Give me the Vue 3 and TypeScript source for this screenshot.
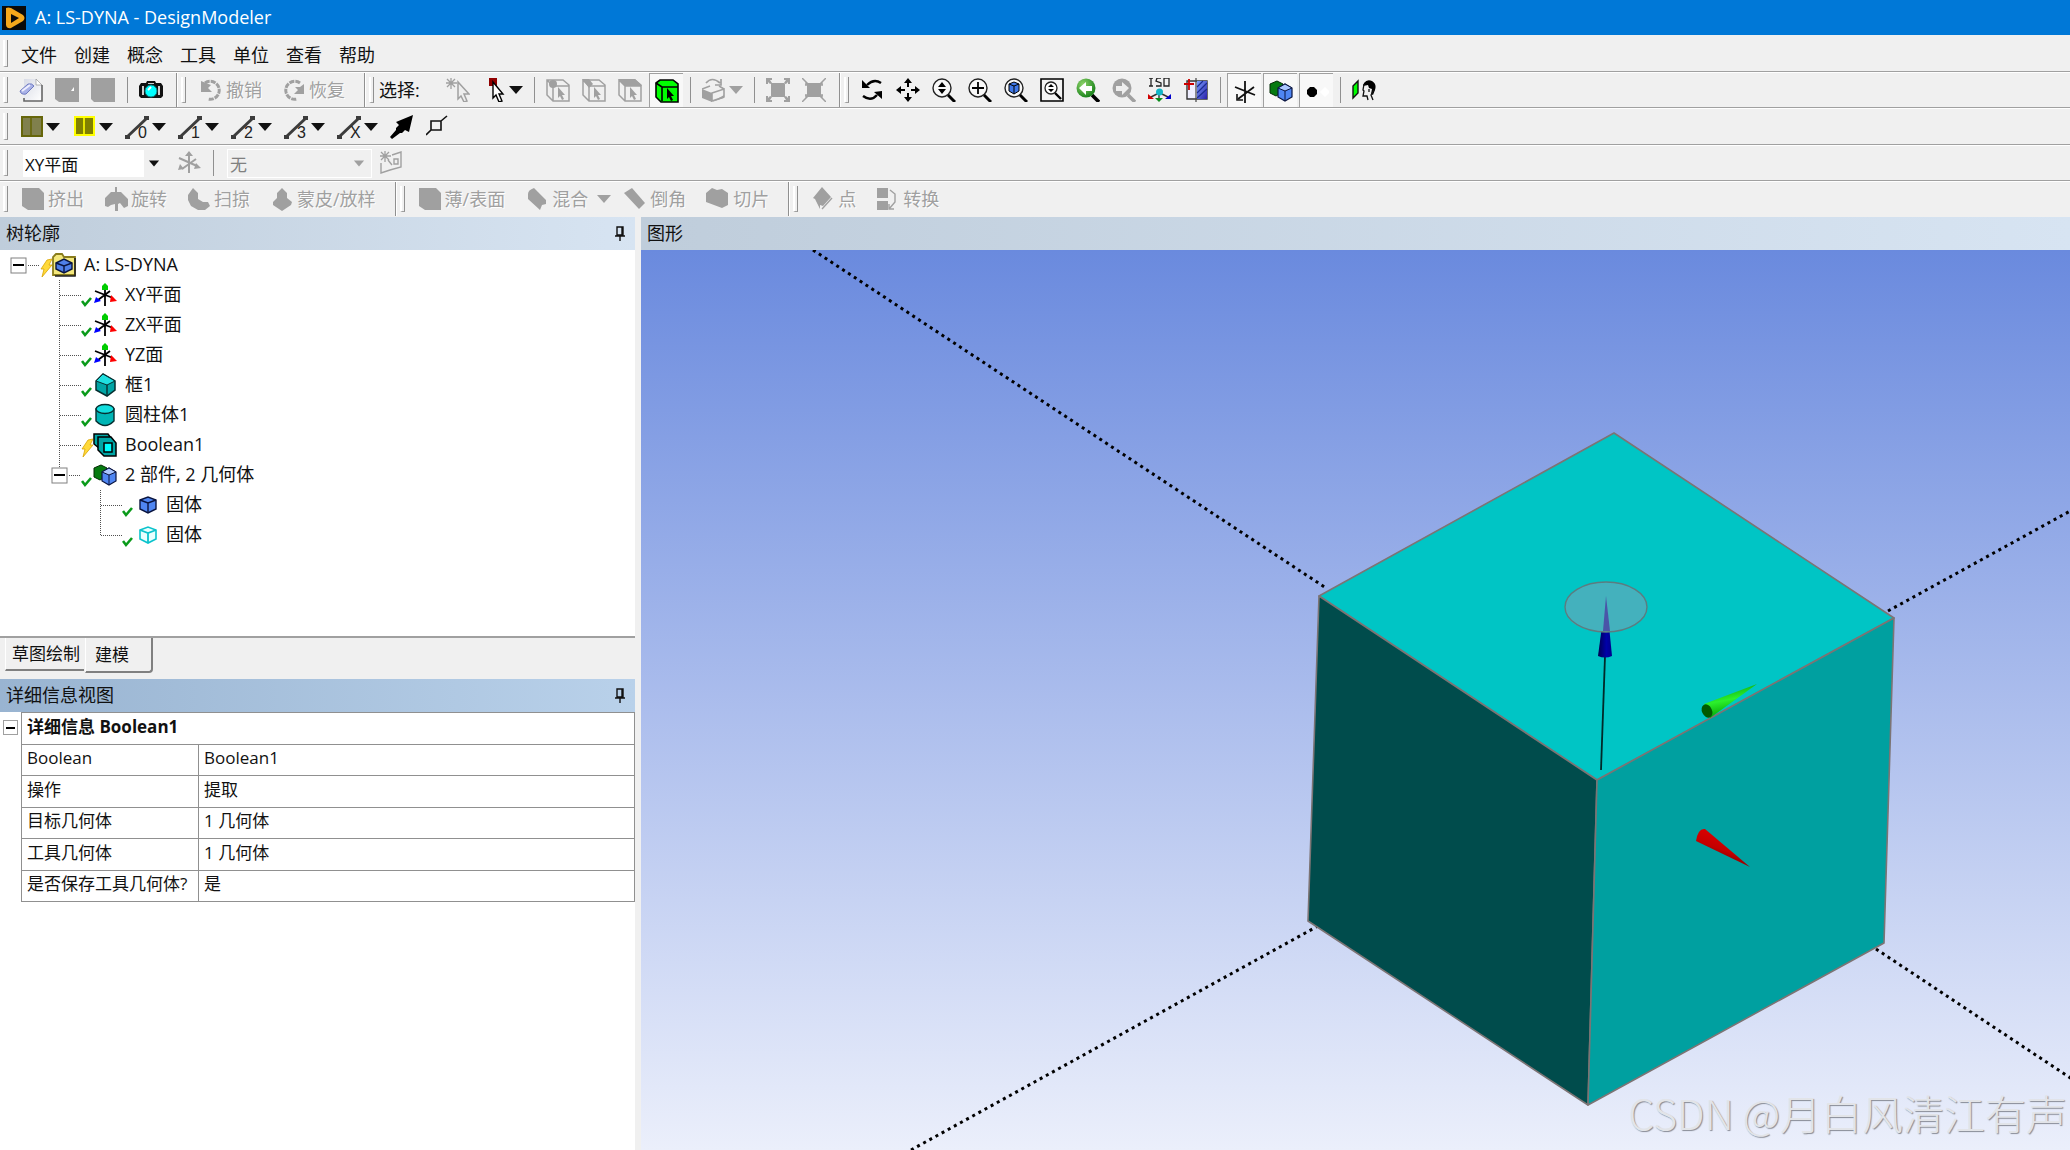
<script setup lang="ts">
import { ref } from 'vue'

type Kind = 'grip' | 'sep' | 'end' | 'btn' | 'drop' | 'text' | 'caret' | 'label'
interface Tool {
  kind: Kind
  icon?: string
  text?: string
  title?: string
  off?: boolean
  on?: boolean
}
interface TreeNode {
  text: string
  icon: string
  status: 'ok' | 'bolt'
  level: 0 | 1 | 2
  open?: boolean
  last?: boolean
}

const menus = ['文件', '创建', '概念', '工具', '单位', '查看', '帮助']

const mainTools: Tool[] = [
  { kind: 'grip' },
  { kind: 'btn', icon: 'new', title: '新建' },
  { kind: 'btn', icon: 'save', title: '保存', off: true },
  { kind: 'btn', icon: 'block', title: '导出', off: true },
  { kind: 'sep' },
  { kind: 'btn', icon: 'camera', title: '截图' },
  { kind: 'end' },
  { kind: 'grip' },
  { kind: 'text', icon: 'undo', text: '撤销', off: true },
  { kind: 'text', icon: 'redo', text: '恢复', off: true },
  { kind: 'end' },
  { kind: 'grip' },
  { kind: 'label', text: '选择:' },
  { kind: 'btn', icon: 'newsel', title: '新建选择', off: true },
  { kind: 'drop', icon: 'pointer', title: '选择模式' },
  { kind: 'sep' },
  { kind: 'btn', icon: 'selpoint', title: '点', off: true },
  { kind: 'btn', icon: 'seledge', title: '边', off: true },
  { kind: 'btn', icon: 'selface', title: '面', off: true },
  { kind: 'btn', icon: 'selbody', title: '体', on: true },
  { kind: 'sep' },
  { kind: 'drop', icon: 'extend', title: '扩展选择', off: true },
  { kind: 'sep' },
  { kind: 'btn', icon: 'expand', title: '放大', off: true },
  { kind: 'btn', icon: 'shrink', title: '缩小', off: true },
  { kind: 'end' },
  { kind: 'grip' },
  { kind: 'btn', icon: 'rotate', title: '旋转' },
  { kind: 'btn', icon: 'pan', title: '平移' },
  { kind: 'btn', icon: 'zoom', title: '缩放' },
  { kind: 'btn', icon: 'zoombox', title: '框选缩放' },
  { kind: 'btn', icon: 'zoomfit', title: '适合窗口' },
  { kind: 'btn', icon: 'magnify', title: '放大镜' },
  { kind: 'btn', icon: 'prev', title: '上一视图' },
  { kind: 'btn', icon: 'next', title: '下一视图', off: true },
  { kind: 'btn', icon: 'iso', title: '等轴测' },
  { kind: 'btn', icon: 'section', title: '截面' },
  { kind: 'sep' },
  { kind: 'btn', icon: 'axes', title: '显示平面', on: true },
  { kind: 'btn', icon: 'cubes', title: '显示模型', on: true },
  { kind: 'btn', icon: 'dots', title: '显示点', on: true },
  { kind: 'sep' },
  { kind: 'btn', icon: 'look', title: '正视于' },
]

const lineTools: Tool[] = [
  { kind: 'grip' },
  { kind: 'drop', icon: 'face', title: '面颜色' },
  { kind: 'drop', icon: 'facey', title: '边颜色' },
  { kind: 'drop', icon: 'edge', text: '0', title: '边 0' },
  { kind: 'drop', icon: 'edge', text: '1', title: '边 1' },
  { kind: 'drop', icon: 'edge', text: '2', title: '边 2' },
  { kind: 'drop', icon: 'edge', text: '3', title: '边 3' },
  { kind: 'drop', icon: 'edge', text: 'X', title: '边 X' },
  { kind: 'btn', icon: 'arrow', title: '方向' },
  { kind: 'btn', icon: 'vertex', title: '顶点' },
]

const featureTools: Tool[] = [
  { kind: 'grip' },
  { kind: 'text', icon: 'extrude', text: '挤出', off: true },
  { kind: 'text', icon: 'revolve', text: '旋转', off: true },
  { kind: 'text', icon: 'sweep', text: '扫掠', off: true },
  { kind: 'text', icon: 'skin', text: '蒙皮/放样', off: true },
  { kind: 'end' },
  { kind: 'grip' },
  { kind: 'text', icon: 'extrude', text: '薄/表面', off: true },
  { kind: 'text', icon: 'blend', text: '混合', off: true },
  { kind: 'caret', title: '混合选项', off: true },
  { kind: 'text', icon: 'chamfer', text: '倒角', off: true },
  { kind: 'text', icon: 'slice', text: '切片', off: true },
  { kind: 'end' },
  { kind: 'grip' },
  { kind: 'text', icon: 'point', text: '点', off: true },
  { kind: 'text', icon: 'convert', text: '转换', off: true },
]

const toolRows: { name: string; items: Tool[] }[] = [
  { name: 'main', items: mainTools },
  { name: 'lines', items: lineTools },
]

const tree: TreeNode[] = [
  { text: 'A: LS-DYNA', icon: 'project', status: 'bolt', level: 0, open: true },
  { text: 'XY平面', icon: 'plane', status: 'ok', level: 1 },
  { text: 'ZX平面', icon: 'plane', status: 'ok', level: 1 },
  { text: 'YZ面', icon: 'plane', status: 'ok', level: 1 },
  { text: '框1', icon: 'box', status: 'ok', level: 1 },
  { text: '圆柱体1', icon: 'cyl', status: 'ok', level: 1 },
  { text: 'Boolean1', icon: 'bool', status: 'bolt', level: 1 },
  { text: '2 部件, 2 几何体', icon: 'cubes', status: 'ok', level: 1, open: true },
  { text: '固体', icon: 'solid', status: 'ok', level: 2 },
  { text: '固体', icon: 'solidc', status: 'ok', level: 2, last: true },
]

const details = [
  ['Boolean', 'Boolean1'],
  ['操作', '提取'],
  ['目标几何体', '1 几何体'],
  ['工具几何体', '1 几何体'],
  ['是否保存工具几何体?', '是'],
]

const plane = ref('XY平面')
const sketch = ref('无')
</script>

<template>
  <div class="app">
    <svg class="defs" aria-hidden="true">
      <defs>
        <linearGradient id="g-hatch" x1="0" y1="0" x2="1" y2="1">
          <stop offset="0" stop-color="#7aa0ff" /><stop offset="1" stop-color="#2a1ea8" />
        </linearGradient>
        <linearGradient id="g-page" x1="0" y1="0" x2="1" y2="1">
          <stop offset="0" stop-color="#d8dbe6" /><stop offset="1" stop-color="#ffffff" />
        </linearGradient>
        <radialGradient id="g-green" cx=".35" cy=".3" r=".8">
          <stop offset="0" stop-color="#8fd46a" /><stop offset="1" stop-color="#0c7a12" />
        </radialGradient>
      </defs>
      <symbol id="i-new" viewBox="0 0 24 24"><path d="M5 1h12l6 6v16H5z" fill="url(#g-page)" /><path d="M17 1v6h6z" fill="#fff" stroke="#888" stroke-width=".6" /><path d="M23 7v16H5v-3" fill="none" stroke="#666" stroke-width="1.6" /><path d="M1 13l8-7q4-1 6 2l-8 8q-5 1-6-3z" fill="#a9b2e8" stroke="#6f7ac0" /><path d="M3 13l8-6" stroke="#eef" stroke-width="2" /></symbol>
      <symbol id="i-save" viewBox="0 0 24 24"><path d="M0 0h24v24H4l-4-3z" fill="#a0a0a0" /><path d="M19 9v4h-3z" fill="#fff" /></symbol>
      <symbol id="i-block" viewBox="0 0 24 24"><path d="M0 0h24v24H3l-3-3z" fill="#a0a0a0" /></symbol>
      <symbol id="i-camera" viewBox="0 0 24 24"><path d="M0 8l2-3h5l1-2h8l1 2h5l2 3v10l-2 2H2l-2-2z" fill="#111" /><path d="M3 8h2v9H3zM19 8h2v9h-2zM9 5h6v1H9z" fill="#ccc" /><circle cx="12" cy="13" r="6" fill="#0ff" stroke="#0a7f80" stroke-width="1" /><path d="M9 12l3-3" stroke="#fff" stroke-width="2" /></symbol>
      <symbol id="i-undo" viewBox="0 0 24 24"><path d="M6 5a9 9 0 1 1 3 16" fill="none" stroke="#a0a0a0" stroke-width="3" stroke-dasharray="5 1" /><path d="M2 3v11h11l-4-4 3-3-5-2z" fill="#a0a0a0" /></symbol>
      <symbol id="i-redo" viewBox="0 0 24 24"><path d="M18 5a9 9 0 1 0-3 16" fill="none" stroke="#a0a0a0" stroke-width="3" stroke-dasharray="5 1" /><path d="M22 6v10H12l4-4-3-3h5z" fill="#a0a0a0" /></symbol>
      <symbol id="i-newsel" viewBox="0 0 24 24"><path d="M5 0v11M0 5h11M1 1l8 8M9 1L1 9" stroke="#a0a0a0" stroke-width="1.3" /><path d="M12 4v17l3-3 3 6 3-1-3-7h5z" fill="#eee" stroke="#a0a0a0" stroke-width="1.5" /></symbol>
      <symbol id="i-pointer" viewBox="0 0 24 24"><path d="M7 0h8v8H7z" fill="#900000" /><path d="M11 4v16l3-3 3 7 3-1-3-7h4z" fill="#fff" stroke="#000" stroke-width="1.4" /></symbol>
      <symbol id="i-selbase" viewBox="0 0 24 24"><path d="M1 2h16l6 5v16H7l-6-6zM7 8h16M7 8v15M1 2l6 6" fill="none" stroke="#a0a0a0" stroke-width="1.5" /><path d="M12 9v11l2-2 2 4 2-1-2-4h3z" fill="#a0a0a0" /></symbol>
      <symbol id="i-selpoint" viewBox="0 0 24 24"><use href="#i-selbase" /><circle cx="7" cy="6" r="4" fill="#a0a0a0" /></symbol>
      <symbol id="i-seledge" viewBox="0 0 24 24"><use href="#i-selbase" /><path d="M0 1h7l4 5-4 4z" fill="#a0a0a0" /></symbol>
      <symbol id="i-selface" viewBox="0 0 24 24"><use href="#i-selbase" /><path d="M0 1h17l7 7H7z" fill="#a0a0a0" /></symbol>
      <symbol id="i-selbody" viewBox="0 0 24 24"><path d="M1 4l4-3h13l5 4v18H6l-5-5z" fill="#0f0" stroke="#000" stroke-width="1.6" /><path d="M1 4l6 4v14M7 8h16" fill="none" stroke="#000" stroke-width="1.6" /><path d="M12 9v11l2-2 2 4 2-1-2-4h3z" fill="#000" /></symbol>
      <symbol id="i-extend" viewBox="0 0 24 24"><path d="M0 11l10 4v9L0 20z" fill="#a0a0a0" /><path d="M10 15l12-4v8l-12 4zM0 11l8-3M22 11l-5-3" fill="none" stroke="#a0a0a0" stroke-width="1.6" /><path d="M10 24l12-7v3z" fill="#a0a0a0" /><path d="M4 5q6-7 14 0M13 7h6V1" fill="none" stroke="#a0a0a0" stroke-width="1.7" /></symbol>
      <symbol id="i-expand" viewBox="0 0 24 24"><path d="M5 5h14v14H5zM0 0h6v2H4l2 3-2 1-2-2v2H0zM24 0h-6v2h2l-2 3 2 1 2-2v2h2zM0 24h6v-2H4l2-3-2-1-2 2v-2H0zM24 24h-6v-2h2l-2-3 2-1 2 2v-2h2z" fill="#a0a0a0" /></symbol>
      <symbol id="i-shrink" viewBox="0 0 24 24"><path d="M5 5h14v14H5z" fill="#a0a0a0" /><path d="M0 0l6 6M24 0l-6 6M0 24l6-6M24 24l-6-6M4 4v3M20 4v3M4 17v3M20 17v3M3 7h4M21 7h-4M3 17h4M21 17h-4" stroke="#a0a0a0" stroke-width="1.5" /></symbol>
      <symbol id="i-rotate" viewBox="0 0 24 24"><path d="M21 5q-7-5-14 2M3 18q8 6 14-1" fill="none" stroke="#000" stroke-width="2.4" /><path d="M2 2v8h8zM22 13v8l-8-7z" fill="#000" /></symbol>
      <symbol id="i-pan" viewBox="0 0 24 24"><path d="M12 3v6M12 15v6M3 12h6M15 12h6" stroke="#000" stroke-width="2" /><path d="M12 0l4 5H8zM12 24l4-5H8zM0 12l5-4v8zM24 12l-5-4v8z" fill="#000" /></symbol>
      <symbol id="i-lens" viewBox="0 0 24 24"><circle cx="10" cy="10" r="9" fill="#f8f8f8" stroke="#222" stroke-width="1.4" /><path d="M16 17l7 7" stroke="#000" stroke-width="3" /></symbol>
      <symbol id="i-zoom" viewBox="0 0 24 24"><use href="#i-lens" /><path d="M10 4l4 5H6zM10 16l4-5H6z" fill="#000" /></symbol>
      <symbol id="i-zoombox" viewBox="0 0 24 24"><use href="#i-lens" /><path d="M10 4v12M4 10h12" stroke="#000" stroke-width="1.8" /></symbol>
      <symbol id="i-zoomfit" viewBox="0 0 24 24"><use href="#i-lens" /><path d="M5 6l5-2 5 2v7l-5 3-5-3z" fill="#3f78e8" stroke="#000" /><path d="M5 6l5 2 5-2M10 8v8" stroke="#000" fill="none" /></symbol>
      <symbol id="i-magnify" viewBox="0 0 24 24"><path d="M1 1h22v22H1z" fill="#f4f4f4" stroke="#000" stroke-width="1.6" /><circle cx="11" cy="10" r="6" fill="#fff" stroke="#222" stroke-width="1.3" /><path d="M15 15l6 6" stroke="#000" stroke-width="2.4" /><path d="M11 6l3 3H8zM11 14l3-3H8z" fill="#000" /></symbol>
      <symbol id="i-prev" viewBox="0 0 24 24"><path d="M16 17l7 7" stroke="#000" stroke-width="3.6" /><circle cx="10" cy="10" r="9.5" fill="url(#g-green)" /><path d="M3 10l7-6v4h6v5h-6v4z" fill="#fff" /></symbol>
      <symbol id="i-next" viewBox="0 0 24 24"><path d="M16 17l7 7" stroke="#a0a0a0" stroke-width="3.6" /><circle cx="10" cy="10" r="9.5" fill="#a0a0a0" /><path d="M17 10l-7-6v4H4v5h6v4z" fill="#eee" /></symbol>
      <symbol id="i-iso" viewBox="0 0 24 24"><path d="M1 0h4M3 0v8M1 8h4M13 0H9L8 3l5 2v3H8M16 0h5v8h-5z" fill="none" stroke="#222" stroke-width="1.3" /><path d="M11 16v6M9 16l-6 3M14 16l6 3" stroke="#333" stroke-width="1.4" /><path d="M0 16v5h6z" fill="#d00000" /><path d="M23 16v5h-6z" fill="#00c" /><path d="M7 20h8l-4 4z" fill="#0a8a1a" /><circle cx="11.500" cy="14" r="3.500" fill="#12b6c8" /></symbol>
      <symbol id="i-section" viewBox="0 0 24 24"><path d="M3 3h20v18H3z" fill="#eef" stroke="#333" stroke-width="1.4" /><path d="M13 3h10v18H13z" fill="url(#g-hatch)" /><path d="M13 9l6-6M13 15L23 5M13 20l10-9" stroke="#1b2a90" stroke-width="1.2" /><path d="M12 0v24" stroke="#444" stroke-width="1.2" /><path d="M5 1v11M0 6h10" stroke="#c00" stroke-width="1.8" /></symbol>
      <symbol id="i-axes" viewBox="0 0 24 24"><path d="M12 2v22M2 8l20 8M21 8L5 20" stroke="#111" stroke-width="1.8" /><path d="M4 15v6h6" stroke="#111" stroke-width="1.6" fill="none" /></symbol>
      <symbol id="i-cubes" viewBox="0 0 24 24"><path d="M1 5l7-3 6 3v8l-7 4-6-3z" fill="#067a10" stroke="#022c05" /><path d="M9 9l7-4 7 4v9l-7 4-7-4z" fill="#4f86f2" stroke="#0a1540" stroke-width="1.2" /><path d="M9 9l7-4 7 4-7 3z" fill="#a9c6ff" stroke="#0a1540" /><path d="M16 12v10" stroke="#0a1540" /></symbol>
      <symbol id="i-dots" viewBox="0 0 24 24"><path d="M5 8h4l3 3v4l-3 3H5l-3-3v-4z" fill="#000" /><path d="M20 8l5 5-5 5-5-5z" fill="#fff" /></symbol>
      <symbol id="i-look" viewBox="0 0 24 24"><path d="M1 8l5-5v12l-5 5z" fill="#0f0" stroke="#111" stroke-width="1.4" /><path d="M12 5q3-4 8-2 5 3 3 9l-2 5-2-1 1-5-3-1-1-3-5 1z" fill="#000" /><path d="M12 6l-1 6 1 1-1 5h4l1 4M22 12l-3 5 2 5M17 11v3" fill="none" stroke="#111" stroke-width="1.3" /></symbol>
      <symbol id="i-face" viewBox="0 0 24 24"><path d="M3 2h20v19H3z" fill="#80804d" stroke="#66660a" stroke-width="2" /><path d="M12 2v19" stroke="#66660a" stroke-width="1.6" /></symbol>
      <symbol id="i-facey" viewBox="0 0 24 24"><path d="M3 2h19v18H3z" fill="#808000" stroke="#ff0" stroke-width="2" /><path d="M12 2v18" stroke="#ff0" stroke-width="1.6" /></symbol>
      <symbol id="i-edge" viewBox="0 0 24 24"><path d="M2 22L22 3" stroke="#3c3c3c" stroke-width="3" /><path d="M0 20h5v4H0zM19 1h5v4h-5z" fill="#3c3c3c" /></symbol>
      <symbol id="i-arrow" viewBox="0 0 24 24"><path d="M23 0l-4 17-4-2-3 3h-2l-8 6-2-2 6-7v-2l3-3-3-3z" fill="#000" /></symbol>
      <symbol id="i-vertex" viewBox="0 0 24 24"><path d="M5 6h10v9H5zM0 20l5-5M15 6l6-5" fill="none" stroke="#111" stroke-width="1.6" /></symbol>
      <symbol id="i-axesoff" viewBox="0 0 24 24"><path d="M12 3v19M2 7l18 8M19 8L5 18" stroke="#a0a0a0" stroke-width="2" /><path d="M12 0l4 5H8zM24 17l-7 1 2-6zM1 19l2-6 4 5z" fill="#a0a0a0" /></symbol>
      <symbol id="i-newsk" viewBox="0 0 24 24"><path d="M6 0v11M1 5h11M2 1l8 8M10 1L2 9" stroke="#a0a0a0" stroke-width="1.3" /><path d="M2 12v10l9-3 11-3V1l-9 3" fill="none" stroke="#a0a0a0" stroke-width="1.4" /><path d="M9 9l4 5M15 8h4v5h-4z" fill="none" stroke="#a0a0a0" stroke-width="1.4" /></symbol>
      <symbol id="i-extrude" viewBox="0 0 24 24"><path d="M1 1h17l5 5v17H7l-6-4z" fill="#a0a0a0" /></symbol>
      <symbol id="i-revolve" viewBox="0 0 24 24"><path d="M1 19V11l6-6h4V0h2v5h4l7 7v7l-4 2-4-5-2 1v7h-3v-7l-4 1-3 2z" fill="#a0a0a0" /></symbol>
      <symbol id="i-sweep" viewBox="0 0 24 24"><path d="M1 8l5-7 5 5v6l5 3h5l2 4-5 4h-7l-7-4-3-6z" fill="#a0a0a0" /></symbol>
      <symbol id="i-skin" viewBox="0 0 24 24"><path d="M12 1l5 5v5l5 4-1 3-9 6-9-6v-3l4-4V6z" fill="#a0a0a0" /></symbol>
      <symbol id="i-blend" viewBox="0 0 24 24"><path d="M3 7q0-4 6-6l12 12v4l-4 1-2 5L3 12z" fill="#a0a0a0" /></symbol>
      <symbol id="i-chamfer" viewBox="0 0 24 24"><path d="M1 6l8-5 13 15-6 6z" fill="#a0a0a0" /></symbol>
      <symbol id="i-slice" viewBox="0 0 24 24"><path d="M0 6l6-5 5 2 5-1 6 4v12l-6 3L0 15z" fill="#a0a0a0" /></symbol>
      <symbol id="i-point" viewBox="0 0 24 24"><path d="M11 0l9 10-8 9-3-1v4L4 12l-2-1z" fill="#a0a0a0" /><path d="M11 22l10-11" stroke="#a0a0a0" stroke-width="1.4" /></symbol>
      <symbol id="i-convert" viewBox="0 0 24 24"><path d="M1 1h11v10H1zM1 14h11v9H1z" fill="#a0a0a0" /><path d="M14 3l5 4v8l-6 7M13 17v5h5" fill="none" stroke="#a0a0a0" stroke-width="1.4" /></symbol>
      <symbol id="i-project" viewBox="0 0 24 24"><path d="M1 22V4l3-3h6l2 3h11v18z" fill="#f4e87c" stroke="#8a7d1c" stroke-width="1.8" /><path d="M23 5v18H3" stroke="#222" stroke-width="1.6" fill="none" /><path d="M4 10l8-4 8 4v6l-8 4-8-4z" fill="#4f7fe8" stroke="#0a1540" stroke-width="1.4" /><path d="M4 10l8 3 8-3M12 13v7" fill="none" stroke="#0a1540" stroke-width="1.4" /></symbol>
      <symbol id="i-plane" viewBox="0 0 24 24"><path d="M12 4v19M2 8l18 7M17 8L5 17" stroke="#000" stroke-width="1.8" /><path d="M12 0l3 3v4H9V3z" fill="#0c0" /><path d="M18 12l6 6-7 1z" fill="#f00" /><path d="M1 20l2-6 5 4z" fill="#00f" /></symbol>
      <symbol id="i-box" viewBox="0 0 24 24"><path d="M3 8l7-7 12 7v9l-8 6-11-6z" fill="#00a5a5" stroke="#062f30" stroke-width="1.5" /><path d="M3 8l7-7 12 7-8 4z" fill="#1fe0e0" stroke="#062f30" /><path d="M14 12v11" stroke="#062f30" stroke-width="1.4" /></symbol>
      <symbol id="i-cyl" viewBox="0 0 24 24"><path d="M3 6v12q9 9 18 0V6z" fill="#00b5b5" stroke="#062f30" stroke-width="1.4" /><ellipse cx="12" cy="6" rx="9" ry="4.500" fill="#12dede" stroke="#062f30" stroke-width="1.4" /></symbol>
      <symbol id="i-bool" viewBox="0 0 24 24"><path d="M1 1h14l3 4v10H6l-5-4z" fill="#00a5a5" stroke="#000" stroke-width="1.5" /><path d="M5 4h13l5 6v13H11l-6-6z" fill="#00a5a5" stroke="#000" stroke-width="1.5" /><path d="M11 10h8v9h-8z" fill="#0ff" stroke="#000" stroke-width="1.5" /></symbol>
      <symbol id="i-solid" viewBox="0 0 24 24"><path d="M6 7l8-3 8 3v9l-8 4-8-4z" fill="#4f86f2" stroke="#0a1540" stroke-width="1.4" /><path d="M6 7l8 3 8-3M14 10v10" fill="none" stroke="#0a1540" stroke-width="1.4" /></symbol>
      <symbol id="i-solidc" viewBox="0 0 24 24"><path d="M6 7l8-3 8 3v9l-8 4-8-4z" fill="#e8ffff" stroke="#0bc3cc" stroke-width="1.6" /><path d="M6 7l8 3 8-3M14 10v10" fill="none" stroke="#0bc3cc" stroke-width="1.8" /></symbol>
    </svg>

    <header class="title">
      <svg class="ico" viewBox="0 0 24 24"><path d="M0 0h24v24H0z" fill="#0a0a0a" /><path d="M4 2q2-1 5 0l12 7q3 3 0 6L9 22q-4 1-5-3z" fill="#f5a81c" /><path d="M9 8l8 4-8 5z" fill="#0a0a0a" /></svg>
      <h1>A: LS-DYNA - DesignModeler</h1>
    </header>

    <nav class="bar menu">
      <span class="grip"></span>
      <button v-for="m in menus" :key="m" type="button">{{ m }}</button>
    </nav>

    <template v-for="row in toolRows" :key="row.name">
      <div class="bar" :class="row.name">
        <template v-for="(t, i) in row.items" :key="i">
          <span v-if="t.kind === 'grip' || t.kind === 'sep' || t.kind === 'end'" :class="t.kind"></span>
          <span v-else-if="t.kind === 'label'" class="lbl">{{ t.text }}</span>
          <button v-else type="button" class="tool" :class="[t.kind, { on: t.on }]" :disabled="t.off" :aria-label="t.title">
            <svg v-if="t.icon" class="ico">
              <use :href="'#i-' + t.icon" />
              <text v-if="t.kind === 'drop' && t.text" x="13" y="23" class="num">{{ t.text }}</text>
            </svg>
            <span v-if="t.kind === 'text'">{{ t.text }}</span>
            <svg v-if="t.kind === 'drop'" class="car" viewBox="0 0 14 8"><path d="M0 0h14L7 8z" /></svg>
          </button>
        </template>
      </div>
    </template>

    <div class="bar planes">
      <span class="grip"></span>
      <label class="combo">
        <select v-model="plane" aria-label="平面">
          <option>XY平面</option><option>ZX平面</option><option>YZ面</option>
        </select>
        <span class="drp"><svg class="car" viewBox="0 0 14 8"><path d="M1 0h12L7 7z" /></svg></span>
      </label>
      <button type="button" class="tool btn" disabled aria-label="新平面"><svg class="ico"><use href="#i-axesoff" /></svg></button>
      <span class="sep"></span>
      <label class="combo off">
        <select v-model="sketch" disabled aria-label="草图"><option>无</option></select>
        <span class="drp"><svg class="car" viewBox="0 0 14 8"><path d="M1 0h12L7 7z" /></svg></span>
      </label>
      <button type="button" class="tool btn" disabled aria-label="新草图"><svg class="ico"><use href="#i-newsk" /></svg></button>
    </div>

    <div class="bar features">
      <template v-for="(t, i) in featureTools" :key="i">
        <span v-if="t.kind === 'grip' || t.kind === 'end'" :class="t.kind"></span>
        <button v-else type="button" class="tool" :class="t.kind" :disabled="t.off" :aria-label="t.title">
          <svg v-if="t.icon" class="ico"><use :href="'#i-' + t.icon" /></svg>
          <span v-if="t.text">{{ t.text }}</span>
          <svg v-if="t.kind === 'caret'" class="car" viewBox="0 0 14 8"><path d="M0 0h14L7 8z" /></svg>
        </button>
      </template>
    </div>

    <main class="work">
      <aside class="side">
        <h2 class="head"><span>树轮廓</span>
          <svg class="pin" viewBox="0 0 12 16"><path d="M3 1h6v8H3zM1 10h10M6 10v5M8 1v8" fill="none" stroke="#111" stroke-width="1.4" /></svg>
        </h2>
        <ul class="tree">
          <li v-for="(n, i) in tree" :key="i" :class="['lv' + n.level, { open: n.open }]">
            <button v-if="n.open" type="button" class="exp" aria-label="折叠">
              <svg width="17" height="30"><path v-if="n.level" d="M8.500 0v7" class="dot" /><rect x="1" y="8" width="15" height="15" fill="#fff" stroke="#808080" /><path d="M3 15h11" stroke="#000" stroke-width="2" /></svg>
            </button>
            <svg v-if="n.open" width="13" height="30"><path d="M1 15.500h11" class="dot" /></svg>
            <svg v-else width="22" height="30"><path :d="n.last ? 'M.5 0v15' : 'M.5 0v30'" class="dot" /><path d="M1 15.500h21" class="dot" /></svg>
            <svg width="12" height="30">
              <path v-if="n.status === 'ok'" d="M1 21l3 4 6-7" fill="none" stroke="#0a9a1a" stroke-width="2.600" />
              <path v-else d="M7 10l5-1-3 6h3L2 27l2-8H1z" fill="#ffd93a" stroke="#d9a400" stroke-width=".8" />
            </svg>
            <svg class="ico"><use :href="'#i-' + n.icon" /></svg>
            <span class="name">{{ n.text }}</span>
          </li>
        </ul>
        <div class="tabs">
          <button type="button">草图绘制</button>
          <button type="button" class="cur">建模</button>
        </div>
        <h2 class="head act"><span>详细信息视图</span>
          <svg class="pin" viewBox="0 0 12 16"><path d="M3 1h6v8H3zM1 10h10M6 10v5M8 1v8" fill="none" stroke="#111" stroke-width="1.4" /></svg>
        </h2>
        <div class="info">
          <div class="gut"><button type="button" aria-label="折叠"></button></div>
          <table>
            <thead><tr><th colspan="2">详细信息 Boolean1</th></tr></thead>
            <tbody>
              <tr v-for="d in details" :key="d[0]"><td class="key">{{ d[0] }}</td><td>{{ d[1] }}</td></tr>
            </tbody>
          </table>
        </div>
      </aside>

      <section class="view">
        <h2 class="head"><span>图形</span></h2>
        <div class="canvas">
          <svg class="scene" viewBox="641 250 1429 900" preserveAspectRatio="xMidYMid slice">
            <defs>
              <linearGradient id="c-blue"><stop offset="0" stop-color="#000050" /><stop offset=".6" stop-color="#0000a8" /><stop offset="1" stop-color="#00008a" /></linearGradient>
              <linearGradient id="c-green" x1="0" y1="0" x2=".3" y2="1"><stop offset="0" stop-color="#008800" /><stop offset=".55" stop-color="#2cf02c" /><stop offset="1" stop-color="#00a000" /></linearGradient>
              <linearGradient id="c-red" x1=".4" y1="0" x2="0" y2=".8"><stop offset="0" stop-color="#e00000" /><stop offset=".5" stop-color="#c40000" /><stop offset="1" stop-color="#500000" /></linearGradient>
            </defs>
            <path d="M813 250L1326 588M1888 611L2072 510M911 1150L1318 926M1876 949L2072 1079" class="axis" />
            <g stroke="#7c7474" stroke-width="1.600" stroke-linejoin="round">
              <path d="M1614 433l280 185-297 162-278-184z" fill="#00c5c5" />
              <path d="M1319 596l278 184-9 325-280-184z" fill="#004c4c" />
              <path d="M1597 780l297-162-10 325-296 162z" fill="#00a0a0" />
            </g>
            <path d="M1605 656l-4 114" stroke="#002a2a" stroke-width="1.800" />
            <path d="M1606 596l6 60q-7 3-14 0z" fill="url(#c-blue)" />
            <path d="M1565 607a41 25 0 0 1 82 0a41 25 0 0 1-39 25h-4q-39-3-39-25z" fill="#44b1bd" />
            <path d="M1606 596l4 35h-7z" fill="#4a55a8" />
            <ellipse cx="1606" cy="607" rx="41" ry="25" fill="none" stroke="#5c7c80" stroke-width="1.400" />
            <path d="M1757 684l-53 20 6 14z" fill="url(#c-green)" />
            <ellipse cx="1707" cy="711" rx="5" ry="7" transform="rotate(-25 1707 711)" fill="#005a00" />
            <path d="M1750 867l-45-38q-7-1-9 12z" fill="url(#c-red)" />
          </svg>
          <p class="mark">CSDN @月白风清江有声</p>
        </div>
      </section>
    </main>
  </div>
</template>

<style>
body { margin: 0; }
</style>

<style scoped>
.app {
  min-height: 100vh;
  display: flex;
  flex-direction: column;
  background: #f0f0f0;
  color: #111;
  font: 18px/24px "Open Sans", "Noto Sans CJK SC", sans-serif;
  overflow: hidden;
}
.defs { position: absolute; width: 0; height: 0; }
button, select { font: inherit; color: inherit; margin: 0; padding: 0; border: 0; background: none; }
h1, h2, p, ul { margin: 0; padding: 0; font-size: 18px; font-weight: 400; }
.ico { width: 24px; height: 24px; flex: none; display: block; overflow: visible; }

.title { display: flex; align-items: center; gap: 9px; height: 35px; padding-left: 2px; background: #0078d7; color: #fff; }
.title h1 { padding-bottom: 2px; }

.bar { display: flex; align-items: stretch; height: 36px; box-sizing: border-box; border-bottom: 1px solid #a0a0a0; border-top: 1px solid #fff; }
.bar.menu, .bar.lines { height: 37px; }
.bar.menu { border-top-color: #f0f0f0; }
.bar.features { border-bottom-color: #f0f0f0; }
.menu button { padding: 2px 9px 0 8px; }
.grip { flex: none; width: 5px; margin: 4px 5px 4px 3px; border-left: 2px solid #fff; border-right: 1px solid #909090; border-bottom: 1px solid #a0a0a0; box-sizing: border-box; }
.sep { flex: none; width: 1px; margin: 4px 5px 4px 6px; background: #909090; }
.end { flex: none; width: 2px; margin-left: 7px; background: #fff; border-left: 1px solid #909090; box-sizing: border-box; }
.lbl { width: 61px; align-self: center; }
.tool { flex: none; display: flex; align-items: center; justify-content: center; color: #111; }
.tool:disabled { color: #a0a0a0; text-shadow: 1px 1px #fff; }
.tool.btn { width: 36px; }
.tool.on { width: 34px; margin: 0 1px; background: #f8f8f8; border-top: 1px solid #a0a0a0; border-left: 1px solid #a0a0a0; }
.tool.drop { width: 52px; gap: 3px; }
.lines .tool.drop { width: 53px; }
.tool.text { gap: 3px; padding: 0 8px; margin-right: 4px; }
.tool.caret { width: 14px; margin: 0 4px 0 -3px; }
.car { width: 14px; height: 8px; fill: currentColor; flex: none; }
.num { font: 16px "Liberation Sans", sans-serif; fill: #222; }

.combo { position: relative; flex: none; display: flex; width: 141px; margin: 4px 7px 3px 10px; background: #fff; font-size: 17px; }
.combo select { flex: 1; appearance: none; padding: 2px 0 0 2px; opacity: 1; }
.combo .drp { position: absolute; right: 0; top: 0; bottom: 0; width: 20px; background: #f0f0f0; display: flex; align-items: center; justify-content: center; pointer-events: none; }
.combo .car { width: 12px; }
.combo.off { width: 145px; margin: 3px 1px 2px 8px; border: 1px solid #fff; background: #f0f0f0; color: #808080; box-sizing: border-box; }
.combo.off .drp { width: 24px; }
.combo.off .car { color: #a0a0a0; }

.work { flex: 1; display: flex; gap: 6px; }
.side { flex: none; width: 635px; background: #fff; }
.head { display: flex; align-items: center; justify-content: space-between; height: 33px; padding: 0 9px 0 6px; background: linear-gradient(90deg, #bfcddb, #d7e4f2); box-sizing: border-box; }
.head span { padding-bottom: 1px; }
.head.act { background: linear-gradient(90deg, #99b4d1, #b9d1ea); }
.pin { width: 12px; height: 16px; }

.tree { list-style: none; min-height: 386px; }
.tree li { display: flex; align-items: center; height: 30px; }
.tree svg { flex: none; display: block; }
.lv0 { padding-left: 10px; }
.lv1 { padding-left: 59px; }
.lv1.open { padding-left: 51px; }
.lv2 { padding-left: 100px; }
.dot { stroke: #505050; stroke-dasharray: 1 1; fill: none; }
.name { margin-left: 8px; padding-bottom: 3px; }

.tabs { display: flex; align-items: flex-start; gap: 1px; height: 43px; padding-left: 5px; background: #f0f0f0; border-top: 2px solid #a0a0a0; box-sizing: border-box; font-size: 17px; }
.tabs button { height: 33px; padding: 0 4px 0 6px; border-bottom: 2px solid #808080; border-left: 1px solid #fff; }
.tabs .cur { height: 35px; padding: 0 22px 0 9px; border-right: 2px solid #808080; border-radius: 0 0 4px 0; }

.info { display: flex; font-size: 17px; }
.gut { width: 21px; }
.gut button { display: block; width: 15px; height: 15px; margin: 8px 0 0 3px; border: 1px solid #a0a0a0; background: linear-gradient(#000, #000) center / 9px 2px no-repeat; }
table { flex: 1; border-collapse: collapse; }
th, td { height: 32px; padding: 0 0 4px 5px; box-sizing: border-box; border: 1px solid #909090; text-align: left; white-space: nowrap; }
tbody tr:nth-child(odd) td { height: 31px; }
.key { width: 177px; }
th { font-weight: 700; }

.view { flex: 1; min-width: 0; display: flex; flex-direction: column; }
.canvas { flex: 1; position: relative; background: linear-gradient(#6a8ade, #ebeffb); overflow: hidden; }
.scene { position: absolute; width: 100%; height: 100%; }
.axis { stroke: #000; stroke-width: 3; stroke-dasharray: 3 4; fill: none; }
.mark { position: absolute; right: 3px; bottom: 8px; font: 300 41px/60px "Noto Sans CJK SC", sans-serif; color: #e2e4e8; text-shadow: 1px 1px 1px #888c96; white-space: nowrap; }
</style>
